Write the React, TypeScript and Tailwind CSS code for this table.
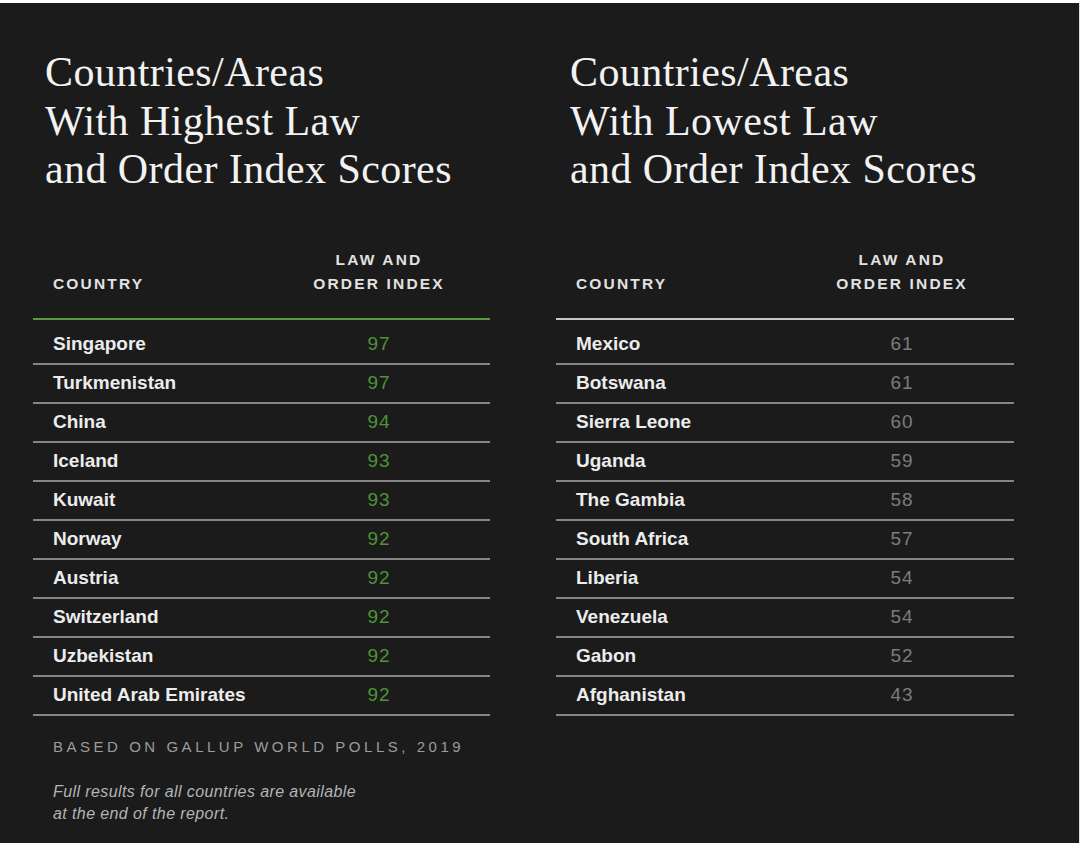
type Row = { name: string; score: number };

const highest: Row[] = [
  { name: "Singapore", score: 97 },
  { name: "Turkmenistan", score: 97 },
  { name: "China", score: 94 },
  { name: "Iceland", score: 93 },
  { name: "Kuwait", score: 93 },
  { name: "Norway", score: 92 },
  { name: "Austria", score: 92 },
  { name: "Switzerland", score: 92 },
  { name: "Uzbekistan", score: 92 },
  { name: "United Arab Emirates", score: 92 },
];

const lowest: Row[] = [
  { name: "Mexico", score: 61 },
  { name: "Botswana", score: 61 },
  { name: "Sierra Leone", score: 60 },
  { name: "Uganda", score: 59 },
  { name: "The Gambia", score: 58 },
  { name: "South Africa", score: 57 },
  { name: "Liberia", score: 54 },
  { name: "Venezuela", score: 54 },
  { name: "Gabon", score: 52 },
  { name: "Afghanistan", score: 43 },
];

const serif = "font-['Liberation_Serif','Times_New_Roman',serif]";
const sans = "font-['Liberation_Sans',Arial,sans-serif]";

function Title({ kind }: { kind: string }) {
  return (
    <h2
      className={`${serif} text-[42px] leading-[48.5px] tracking-[0.01em] text-[#f2f2f2] font-normal`}
    >
      Countries/Areas
      <br />
      With {kind} Law
      <br />
      and Order Index Scores
    </h2>
  );
}

function ScoreTable({ rows, accent }: { rows: Row[]; accent: boolean }) {
  return (
    <div className={sans}>
      <div
        className={`flex items-end pl-[20px] pb-[22px] border-b-2 ${
          accent ? "border-[#5b9a3c]" : "border-[#c8c8c8]"
        } text-[15.5px] leading-[24px] font-bold tracking-[0.14em] text-[#e2e2e2]`}
      >
        <div className="w-[280px]">COUNTRY</div>
        <div className="w-[92px] text-center whitespace-nowrap flex flex-col items-center">
          <span>LAW AND</span>
          <span>ORDER INDEX</span>
        </div>
      </div>
      <div className="pt-[6px]">
        {rows.map((r) => (
          <div
            key={r.name}
            className="flex items-center h-[39px] pl-[20px] border-b-2 border-[#858585]"
          >
            <div className="w-[280px] text-[19px] font-bold text-[#ececec]">{r.name}</div>
            <div
              className={`w-[92px] text-center text-[19px] tracking-[0.05em] ${
                accent ? "text-[#4f9238]" : "text-[#7b7b7b]"
              }`}
            >
              {r.score}
            </div>
          </div>
        ))}
      </div>
    </div>
  );
}

export default function App() {
  return (
    <div className="w-full min-h-[843px] bg-[#1b1b1b] border-t-[3px] border-t-white border-r border-r-[#dcdcdc]">
      <div className="flex gap-[66px] pl-[33px]">
        <div className="w-[457px]">
          <div className="pt-[45px] pl-[12px]">
            <Title kind="Highest" />
          </div>
          <div className="mt-[54px]">
            <ScoreTable rows={highest} accent />
          </div>
          <div className="pl-[20px]">
            <p
              className={`${sans} mt-[21px] text-[15px] leading-[20px] tracking-[0.235em] text-[#9c9c9c] whitespace-nowrap`}
            >
              BASED ON GALLUP WORLD POLLS, 2019
            </p>
            <p
              className={`${sans} mt-[24px] italic text-[16px] leading-[22px] tracking-[0.025em] text-[#b4b4b4]`}
            >
              Full results for all countries are available
              <br />
              at the end of the report.
            </p>
          </div>
        </div>
        <div className="w-[458px]">
          <div className="pt-[45px] pl-[14px]">
            <Title kind="Lowest" />
          </div>
          <div className="mt-[54px]">
            <ScoreTable rows={lowest} accent={false} />
          </div>
        </div>
      </div>
    </div>
  );
}
